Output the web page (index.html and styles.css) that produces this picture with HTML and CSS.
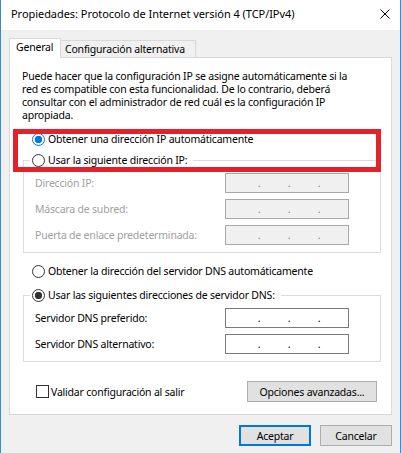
FILE: index.html
```html
<!DOCTYPE html>
<html lang="es">
<head>
    <meta charset="UTF-8">
    <meta name="viewport" content="width=device-width, initial-scale=1.0">
    <title>Propiedades: Protocolo de Internet versión 4 (TCP/IPv4)</title>
    <link rel="stylesheet" href="styles.css">
</head>
<body>
    <div class="window">
        <!-- Barra del título -->
        <div class="titlebar">
            <span class="title">Propiedades: Protocolo de Internet versión 4 (TCP/IPv4)</span>
            <svg class="close" width="10" height="10" viewBox="0 0 10 10">
                <path d="M0.5 0.5 L9.5 9.5 M9.5 0.5 L0.5 9.5" stroke="#000" stroke-width="1" fill="none"/>
            </svg>
        </div>

        <div class="content">
            <div class="tabs">
                <div class="tab tab-active">General</div>
                <div class="tab tab-alt">Configuración alternativa</div>
            </div>

            <div class="panel">
                <p class="intro">
                    Puede hacer que la configuración IP se asigne automáticamente si la<br>
                    red es compatible con esta funcionalidad. De lo contrario, deberá<br>
                    consultar con el administrador de red cuál es la configuración IP<br>
                    apropiada.
                </p>

                <!-- Marco rojo sobre las dos primeras opciones -->
                <div class="highlight"></div>

                <label class="option option-first">
                    <input type="radio" class="radio radio-focus" name="ip" checked>
                    Obtener una dirección IP automáticamente
                </label>

                <fieldset class="group group-ip">
                    <legend class="legend">
                        <label class="option">
                            <input type="radio" class="radio" name="ip">
                            Usar la siguiente dirección IP:
                        </label>
                    </legend>
                    <div class="row disabled">
                        <span>Dirección IP:</span>
                        <div class="ip ip-disabled"><span>.</span><span>.</span><span>.</span></div>
                    </div>
                    <div class="row disabled">
                        <span>Máscara de subred:</span>
                        <div class="ip ip-disabled"><span>.</span><span>.</span><span>.</span></div>
                    </div>
                    <div class="row disabled">
                        <span>Puerta de enlace predeterminada:</span>
                        <div class="ip ip-disabled"><span>.</span><span>.</span><span>.</span></div>
                    </div>
                </fieldset>

                <label class="option option-dns">
                    <input type="radio" class="radio" name="dns">
                    Obtener la dirección del servidor DNS automáticamente
                </label>

                <fieldset class="group group-dns">
                    <legend class="legend">
                        <label class="option">
                            <input type="radio" class="radio" name="dns" checked>
                            Usar las siguientes direcciones de servidor DNS:
                        </label>
                    </legend>
                    <div class="row">
                        <span>Servidor DNS preferido:</span>
                        <div class="ip"><span>.</span><span>.</span><span>.</span></div>
                    </div>
                    <div class="row">
                        <span>Servidor DNS alternativo:</span>
                        <div class="ip"><span>.</span><span>.</span><span>.</span></div>
                    </div>
                </fieldset>

                <div class="footer-row">
                    <label class="check-label">
                        <input type="checkbox" class="checkbox">
                        Validar configuración al salir
                    </label>
                    <button class="btn btn-advanced">Opciones avanzadas...</button>
                </div>
            </div>

            <div class="actions">
                <button class="btn btn-default">Aceptar</button>
                <button class="btn">Cancelar</button>
            </div>
        </div>
    </div>
</body>
</html>
```

FILE: styles.css
```css
body {
    margin: 0;
    font-family: "Noto Sans", sans-serif;
    font-size: 10.5px;
    letter-spacing: -0.2px;
    color: #000;
}
.window {
    width: 401px;
    height: 453px;
    box-sizing: border-box;
    background: #f0f0f0;
    border-left: 1px solid #3a8ad6;
    border-right: 1px solid #3a8ad6;
}
.titlebar {
    display: flex;
    align-items: flex-start;
    height: 30px;
    background: #fff;
}
.title {
    margin: 6px 0 0 10px;
    font-size: 11px;
    letter-spacing: -0.05px;
    line-height: 16px;
}
.close {
    margin: 9px 10px 0 auto;
}
.content {
    padding: 8px 8px 0 8px;
}
.tabs {
    display: flex;
    align-items: flex-end;
}
.tab {
    box-sizing: border-box;
    border: 1px solid #d9d9d9;
    border-bottom: none;
    line-height: 16px;
    white-space: nowrap;
}
.tab-active {
    position: relative;
    z-index: 1;
    width: 52px;
    height: 20px;
    padding: 0 0 3px 6px;
    margin-bottom: -1px;
    background: #fff;
}
.tab-alt {
    width: 135px;
    height: 17px;
    padding-left: 4px;
    border-left: none;
    background: #f0f0f0;
}
.panel {
    position: relative;
    border: 1px solid #d9d9d9;
    background: #fff;
    padding: 12px 10px 12px 13px;
}
.intro {
    margin: 0 0 0 -1px;
    line-height: 13px;
}
.highlight {
    position: absolute;
    left: 3px;
    top: 71px;
    width: 368px;
    height: 43px;
    box-sizing: border-box;
    border: 5px solid #e3212b;
    z-index: 2;
}
.option {
    display: flex;
    align-items: center;
    height: 16px;
    line-height: 16px;
    white-space: nowrap;
}
.option-first {
    margin-top: 9px;
    padding-left: 9px;
}
.option-dns {
    margin-top: 10px;
    padding-left: 9px;
}
.radio {
    appearance: none;
    box-sizing: border-box;
    width: 13px;
    height: 13px;
    margin: 0 3px 0 0;
    border: 1px solid #333;
    border-radius: 50%;
    background: #fff;
}
.radio:checked {
    background: radial-gradient(circle, #333 0 3.4px, #fff 4px);
}
.radio-focus,
.radio-focus:checked {
    border-color: #0078d7;
    background: radial-gradient(circle, #0078d7 0 3.4px, #fff 4px);
}
.group {
    margin: 0;
    min-width: 0;
    border: 1px solid #dcdcdc;
    padding: 5px 10px 7px 11px;
}
.group-ip {
    margin-top: 5px;
}
.group-dns {
    margin-top: 8px;
}
.legend {
    margin-left: -5px;
    padding: 0 6px 0 2px;
}
.row {
    display: grid;
    grid-template-columns: 190px 124px;
    align-items: center;
    height: 20px;
}
.row + .row {
    margin-top: 6px;
}
.disabled {
    color: #a0a0a0;
}
.ip {
    display: flex;
    box-sizing: border-box;
    height: 20px;
    padding-left: 18px;
    border: 1px solid #7a7a7a;
    background: #fff;
    line-height: 18px;
    color: #000;
}
.ip span {
    width: 30px;
    text-align: center;
}
.ip-disabled {
    border-color: #a8a8a8;
    background: #f0f0f0;
    color: #808080;
}
.footer-row {
    display: flex;
    align-items: center;
    justify-content: space-between;
    margin-top: 19px;
    height: 21px;
}
.check-label {
    display: flex;
    align-items: center;
    margin-left: 13px;
    line-height: 16px;
}
.checkbox {
    appearance: none;
    box-sizing: border-box;
    width: 13px;
    height: 13px;
    margin: 0 2px 0 0;
    border: 1px solid #333;
    background: #fff;
}
.btn {
    box-sizing: border-box;
    height: 21px;
    padding: 0;
    border: 1px solid #adadad;
    background: #e1e1e1;
    font: inherit;
    letter-spacing: inherit;
    color: #000;
}
.btn-advanced {
    width: 130px;
    margin-right: 4px;
}
.actions {
    display: flex;
    justify-content: flex-end;
    gap: 9px;
    margin-top: 10px;
}
.actions .btn {
    width: 72px;
}
.btn-default {
    border: 2px solid #0078d7;
}
```
